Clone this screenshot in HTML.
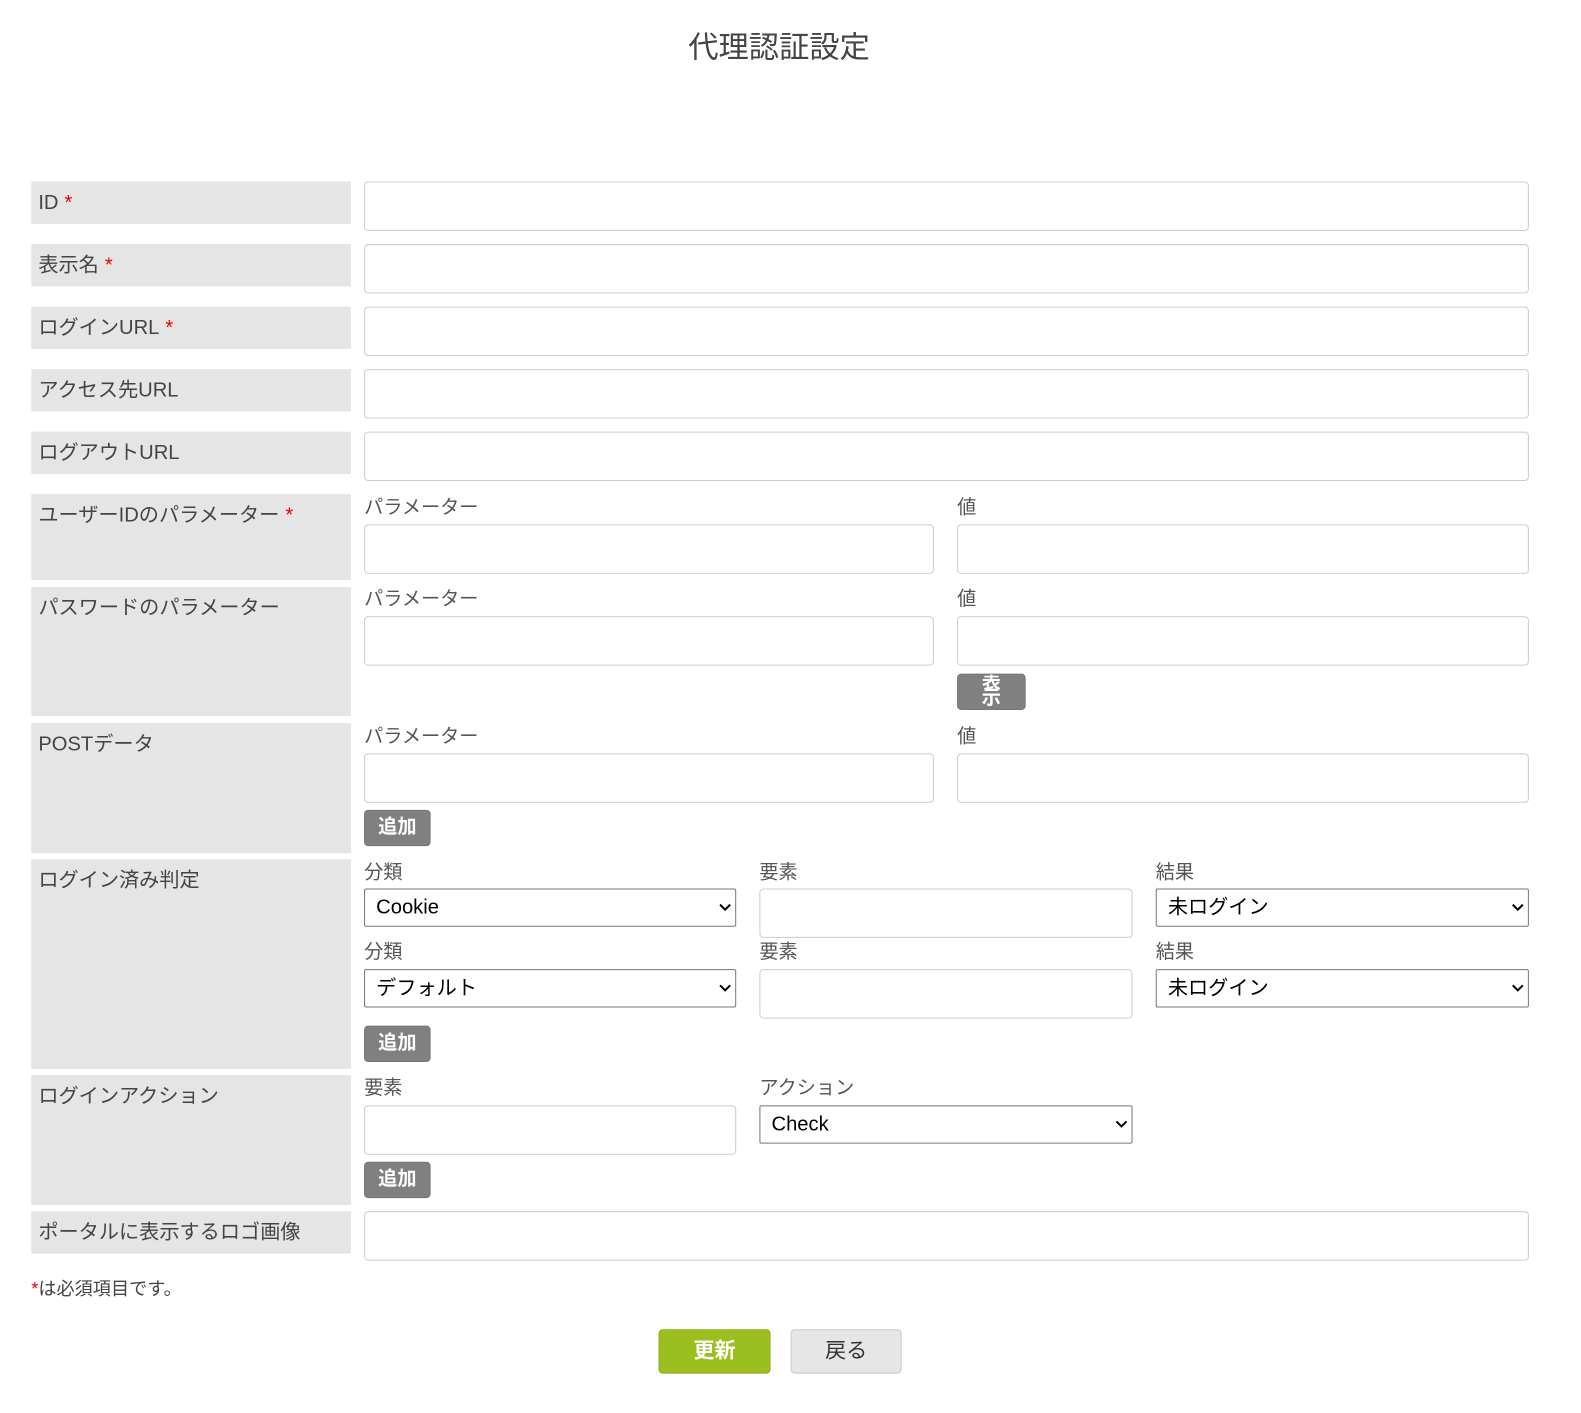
<!DOCTYPE html>
<html><head><meta charset="utf-8">
<style>
*{box-sizing:border-box;margin:0;padding:0}
body{width:1581px;height:1413px;background:#fff;position:relative;font-family:"Liberation Sans","Noto Sans CJK JP",sans-serif;color:#333;overflow:hidden}
#w{position:absolute;left:0;top:0;width:1568px;height:1401px;transform:scale(1.0085);transform-origin:0 0}
.a{position:absolute}
.lab{position:absolute;left:31px;width:317px;background:#e5e5e5;font-size:20px;color:#444;padding:8px 0 0 7px;line-height:26px}
.req{color:#e00;margin-left:6px}
.inp{position:absolute;border:1px solid #ccc;border-radius:4px;background:#fff;height:49px}
.sub{position:absolute;font-size:19px;color:#555;line-height:20px}
.sel{position:absolute;border:1px solid #767676;border-radius:2px;height:38px;background:#fff;font-size:20px;color:#000;padding:0 0 0 11px;line-height:36px}
.sel svg{position:absolute;right:4px;top:13px}
.btn{position:absolute;background:#808080;color:#fff;font-weight:bold;font-size:19px;border-radius:4px;border:1px solid #777;text-align:center;width:66px;height:36px;line-height:34px}
</style></head><body><div id="w">
<div class="a" style="left:0;width:1545px;top:28px;text-align:center;font-size:30px;color:#444;line-height:40px">代理認証設定</div>

<div class="lab" style="top:180px;height:42px">ID<span class="req">*</span></div>
<div class="inp" style="left:361px;width:1155px;top:180px"></div>
<div class="lab" style="top:242px;height:42px">表示名<span class="req">*</span></div>
<div class="inp" style="left:361px;width:1155px;top:242px"></div>
<div class="lab" style="top:304px;height:42px">ログインURL<span class="req">*</span></div>
<div class="inp" style="left:361px;width:1155px;top:304px"></div>
<div class="lab" style="top:366px;height:42px">アクセス先URL</div>
<div class="inp" style="left:361px;width:1155px;top:366px"></div>
<div class="lab" style="top:428px;height:42px">ログアウトURL</div>
<div class="inp" style="left:361px;width:1155px;top:428px"></div>

<div class="lab" style="top:490px;height:85px;padding-top:8px">ユーザーIDのパラメーター<span class="req">*</span></div>
<div class="sub" style="left:361px;top:494px">パラメーター</div>
<div class="sub" style="left:949px;top:494px">値</div>
<div class="inp" style="left:361px;width:565px;top:520px"></div>
<div class="inp" style="left:949px;width:567px;top:520px"></div>

<div class="lab" style="top:582px;height:128px">パスワードのパラメーター</div>
<div class="sub" style="left:361px;top:585px">パラメーター</div>
<div class="sub" style="left:949px;top:585px">値</div>
<div class="inp" style="left:361px;width:565px;top:611px"></div>
<div class="inp" style="left:949px;width:567px;top:611px"></div>
<div class="btn" style="left:949px;top:668px;width:68px;height:36px;line-height:16px;font-size:19px;padding:0 23px;word-break:break-all;overflow:hidden">表示</div>

<div class="lab" style="top:717px;height:129px">POSTデータ</div>
<div class="sub" style="left:361px;top:721px">パラメーター</div>
<div class="sub" style="left:949px;top:721px">値</div>
<div class="inp" style="left:361px;width:565px;top:747px"></div>
<div class="inp" style="left:949px;width:567px;top:747px"></div>
<div class="btn" style="left:361px;top:803px">追加</div>

<div class="lab" style="top:852px;height:208px">ログイン済み判定</div>
<div class="sub" style="left:361px;top:856px">分類</div>
<div class="sub" style="left:753px;top:856px">要素</div>
<div class="sub" style="left:1146px;top:856px">結果</div>
<div class="sel" style="left:361px;width:369px;top:881px">Cookie<svg width="12" height="10" viewBox="0 0 12 10"><path d="M1 2l5 5 5-5" stroke="#000" stroke-width="2" fill="none"/></svg></div>
<div class="inp" style="left:753px;width:370px;top:881px"></div>
<div class="sel" style="left:1146px;width:370px;top:881px">未ログイン<svg width="12" height="10" viewBox="0 0 12 10"><path d="M1 2l5 5 5-5" stroke="#000" stroke-width="2" fill="none"/></svg></div>
<div class="sub" style="left:361px;top:935px">分類</div>
<div class="sub" style="left:753px;top:935px">要素</div>
<div class="sub" style="left:1146px;top:935px">結果</div>
<div class="sel" style="left:361px;width:369px;top:961px">デフォルト<svg width="12" height="10" viewBox="0 0 12 10"><path d="M1 2l5 5 5-5" stroke="#000" stroke-width="2" fill="none"/></svg></div>
<div class="inp" style="left:753px;width:370px;top:961px"></div>
<div class="sel" style="left:1146px;width:370px;top:961px">未ログイン<svg width="12" height="10" viewBox="0 0 12 10"><path d="M1 2l5 5 5-5" stroke="#000" stroke-width="2" fill="none"/></svg></div>
<div class="btn" style="left:361px;top:1017px">追加</div>

<div class="lab" style="top:1066px;height:129px">ログインアクション</div>
<div class="sub" style="left:361px;top:1070px">要素</div>
<div class="sub" style="left:753px;top:1070px">アクション</div>
<div class="inp" style="left:361px;width:369px;top:1096px"></div>
<div class="sel" style="left:753px;width:370px;top:1096px">Check<svg width="12" height="10" viewBox="0 0 12 10"><path d="M1 2l5 5 5-5" stroke="#000" stroke-width="2" fill="none"/></svg></div>
<div class="btn" style="left:361px;top:1152px">追加</div>

<div class="lab" style="top:1201px;height:42px">ポータルに表示するロゴ画像</div>
<div class="inp" style="left:361px;width:1155px;top:1201px"></div>

<div class="a" style="left:31px;top:1267px;font-size:18px;color:#444;line-height:22px"><span style="color:#e00">*</span>は必須項目です。</div>

<div class="a" style="left:653px;top:1318px;width:111px;height:44px;background:#9abf1e;border-radius:4px;border:1px solid #8aae14;color:#fff;font-weight:bold;font-size:21px;text-align:center;line-height:42px">更新</div>
<div class="a" style="left:784px;top:1318px;width:110px;height:44px;background:#e6e6e6;border-radius:4px;border:1px solid #c8c8c8;color:#333;font-size:21px;text-align:center;line-height:42px">戻る</div>
</div></body></html>
